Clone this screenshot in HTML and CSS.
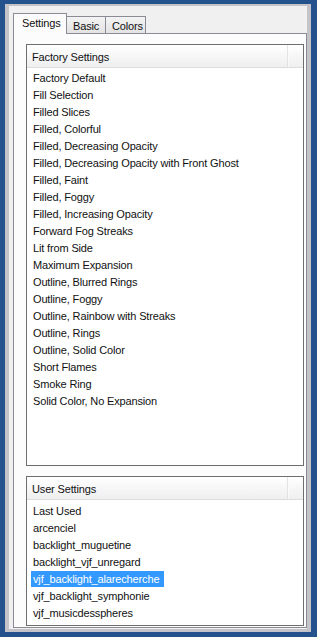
FILE: index.html
```html
<!DOCTYPE html>
<html>
<head>
<meta charset="utf-8">
<link rel="stylesheet" href="styles.css">
</head>
<body>
<div class="win">
  <div class="tabs">
    <div class="tab active">Settings</div>
    <div class="tab">Basic</div>
    <div class="tab">Colors</div>
  </div>
  <div class="panel">
    <div class="listbox factory">
      <div class="header"><span class="htext">Factory Settings</span><span class="hdiv"></span></div>
      <ul class="items">
        <li><span>Factory Default</span></li>
        <li><span>Fill Selection</span></li>
        <li><span>Filled Slices</span></li>
        <li><span>Filled, Colorful</span></li>
        <li><span>Filled, Decreasing Opacity</span></li>
        <li><span>Filled, Decreasing Opacity with Front Ghost</span></li>
        <li><span>Filled, Faint</span></li>
        <li><span>Filled, Foggy</span></li>
        <li><span>Filled, Increasing Opacity</span></li>
        <li><span>Forward Fog Streaks</span></li>
        <li><span>Lit from Side</span></li>
        <li><span>Maximum Expansion</span></li>
        <li><span>Outline, Blurred Rings</span></li>
        <li><span>Outline, Foggy</span></li>
        <li><span>Outline, Rainbow with Streaks</span></li>
        <li><span>Outline, Rings</span></li>
        <li><span>Outline, Solid Color</span></li>
        <li><span>Short Flames</span></li>
        <li><span>Smoke Ring</span></li>
        <li><span>Solid Color, No Expansion</span></li>
      </ul>
    </div>
    <div class="listbox user">
      <div class="header"><span class="htext">User Settings</span><span class="hdiv"></span></div>
      <ul class="items">
        <li><span>Last Used</span></li>
        <li><span>arcenciel</span></li>
        <li><span>backlight_muguetine</span></li>
        <li><span>backlight_vjf_unregard</span></li>
        <li class="selected"><span>vjf_backlight_alarecherche</span></li>
        <li><span>vjf_backlight_symphonie</span></li>
        <li><span>vjf_musicdesspheres</span></li>
      </ul>
    </div>
  </div>
</div>
</body>
</html>
```

FILE: styles.css
```css
html, body {
  margin: 0;
  padding: 0;
}
body {
  width: 317px;
  height: 637px;
  background: #24528c;
  font-family: "Liberation Sans", Arial, sans-serif;
  font-size: 11px;
  letter-spacing: -0.15px;
  color: #111;
  box-sizing: border-box;
  padding: 4px 6px 5px 5px;
}
.win {
  box-sizing: border-box;
  width: 306px;
  height: 628px;
  border-style: solid;
  border-color: #c4c4c8;
  border-width: 2px 4px 3px 4px;
  background: #f0f0f0;
  display: flex;
  flex-direction: column;
}
.tabs {
  display: flex;
  align-items: flex-end;
  height: 27px;
  padding-left: 4px;
  box-sizing: border-box;
}
.tab {
  box-sizing: border-box;
  height: 17px;
  border: 1px solid #898c95;
  border-bottom: none;
  background: linear-gradient(#f3f3f3, #e3e3e3);
  line-height: 18px;
  padding: 0 5px;
  margin-left: -1px;
}
.tab:nth-child(2) { width: 40px; padding-left: 6px; }
.tab:nth-child(3) { width: 41px; padding-left: 6px; }
.tab.active {
  position: relative;
  z-index: 2;
  height: 21px;
  width: 54px;
  margin-left: 0;
  margin-bottom: -1px;
  background: #fcfcfc;
  padding-left: 8px;
  line-height: 19px;
}
.panel {
  box-sizing: border-box;
  flex: 1;
  margin-left: 4px;
  margin-bottom: 1px;
  border: 1px solid #898c95;
  background: #fcfcfc;
  padding: 10px 2px 1px 12px;
  display: flex;
  flex-direction: column;
  gap: 10px;
}
.listbox {
  box-sizing: border-box;
  border: 1px solid #6e6e6e;
  background: #fff;
  display: flex;
  flex-direction: column;
}
.factory { height: 422px; }
.user { flex: 1; }
.header {
  height: 22px;
  border-bottom: 1px solid #dcdcdc;
  background: linear-gradient(#ffffff, #f5f5f6 60%, #eeeff0);
  display: flex;
  align-items: center;
  justify-content: space-between;
}
.htext {
  padding-left: 5px;
  padding-top: 1px;
}
.hdiv {
  width: 1px;
  height: 22px;
  background: #e2e3e5;
  margin-right: 15px;
  box-shadow: 1px 0 0 #fbfbfb;
}
.items {
  list-style: none;
  margin: 0;
  padding: 2px 0 0;
}
.user .items { padding-top: 3px; }
.items li {
  height: 17px;
  line-height: 17px;
  padding-left: 4px;
}
.items li span {
  display: inline-block;
  padding: 0 2px;
  height: 16px;
  line-height: 17px;
}
.items li.selected span {
  background: #3399ff;
  color: #fff;
  padding-right: 5px;
}
```
